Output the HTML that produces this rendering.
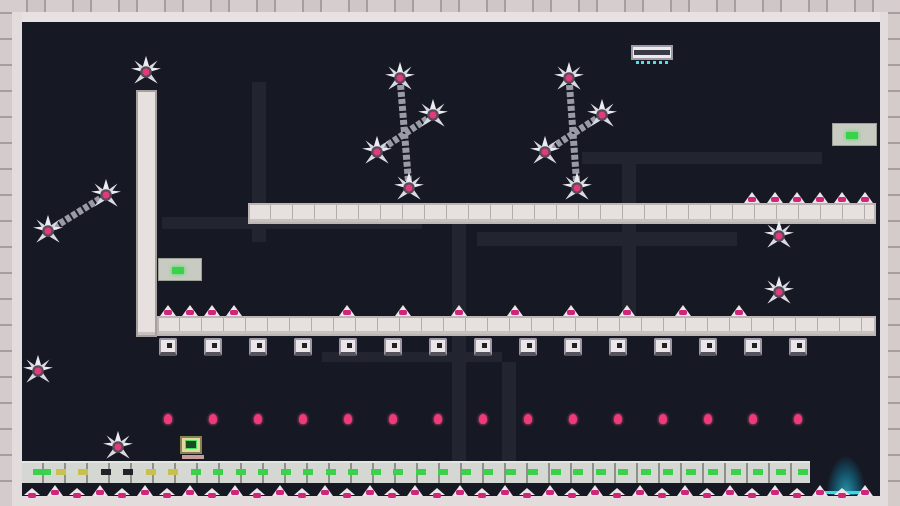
<!DOCTYPE html>
<html><head><meta charset="utf-8"><style>
*{margin:0;padding:0;box-sizing:border-box}
body{width:900px;height:506px;overflow:hidden;background:#c6bcbc;position:relative;font-family:"Liberation Sans",sans-serif}
.a{position:absolute}
#bg{left:22px;top:22px;width:858px;height:474px;background:#161824;overflow:hidden}
.pipe{position:absolute;background:#22252f}
.outer{background:repeating-linear-gradient(90deg,#d6cece 0 26px,#a89e9e 26px 28px,#cfc6c6 28px 44px,#a89e9e 44px 46px)}
.plat{position:absolute;background:#e6e0df;border:2px solid #bdb4b4;box-shadow:inset 0 -3px 0 #c9c0c0}
.plat.d{background:repeating-linear-gradient(90deg,#e6e0df 0 20px,#b4abab 20px 21px,#e6e0df 21px 22px)}
.spk{position:absolute;width:0;height:0;border-left:8px solid transparent;border-right:8px solid transparent;border-bottom:11px solid #ece6e6}
.spk:after{content:"";position:absolute;left:-4px;top:5px;width:8px;height:5px;background:#d0257a;border-radius:2px}
.lamp{position:absolute;width:18px;height:18px;background:#eae6ea;border:2px solid #9c97a2;border-radius:2px;border-bottom:4px solid #55525c}
.lamp:after{content:"";position:absolute;left:6px;top:3px;width:5px;height:5px;background:#222}
.fl{position:absolute;width:8px;height:10px;background:#ee3a78;border-radius:50% 50% 40% 40%;box-shadow:0 0 3px #ff5a90}
.gw{position:absolute;width:12px;height:7px;background:#39d24a;box-shadow:0 0 4px #3de04d}
</style></head><body>
<div class="a outer" style="left:0;top:0;width:900px;height:12px"></div>
<div class="a" style="left:12px;top:12px;width:876px;height:10px;background:#e7e1e1"></div>
<div class="a" style="left:12px;top:12px;width:10px;height:490px;background:#e2dcdc"></div>
<div class="a" style="left:880px;top:12px;width:8px;height:490px;background:#e2dcdc"></div>
<div class="a" style="left:0;top:12px;width:12px;height:494px;background:repeating-linear-gradient(0deg,#d4cbcb 0 24px,#a89e9e 24px 26px)"></div>
<div class="a" style="left:888px;top:12px;width:12px;height:494px;background:repeating-linear-gradient(0deg,#d4cbcb 0 24px,#a89e9e 24px 26px)"></div>
<div class="a" style="left:12px;top:496px;width:876px;height:10px;background:#e2dcdc"></div>
<div id="bg" class="a">
 <div class="pipe" style="left:140px;top:195px;width:260px;height:12px"></div>
 <div class="pipe" style="left:230px;top:60px;width:14px;height:160px"></div>
 <div class="pipe" style="left:430px;top:200px;width:14px;height:240px"></div>
 <div class="pipe" style="left:455px;top:210px;width:260px;height:14px"></div>
 <div class="pipe" style="left:560px;top:130px;width:240px;height:12px"></div>
 <div class="pipe" style="left:480px;top:340px;width:14px;height:100px"></div>
 <div class="pipe" style="left:300px;top:330px;width:180px;height:10px"></div>
 <div class="pipe" style="left:600px;top:140px;width:14px;height:160px"></div>
</div>
<div class="plat" style="left:136px;top:90px;width:21px;height:247px;border-color:#a89f9f"></div>
<div class="plat d" style="left:248px;top:203px;width:628px;height:21px"></div>
<div class="plat d" style="left:157px;top:316px;width:719px;height:20px"></div>
<div class="a" style="left:158px;top:258px;width:44px;height:23px;background:#c7cbc2;border:1px solid #9aa095"></div>
<div class="gw" style="left:172px;top:267px"></div>
<div class="a" style="left:832px;top:123px;width:45px;height:23px;background:#c7cbc2;border:1px solid #9aa095"></div>
<div class="gw" style="left:846px;top:132px"></div>
<div class="a" style="left:631px;top:45px;width:42px;height:15px;background:#eceaee;border:2px solid #9e9aa4"></div>
<div class="a" style="left:634px;top:50px;width:36px;height:5px;background:#3a3a44"></div>
<div class="a" style="left:636px;top:60px;width:32px;height:4px;border-bottom:3px dotted #4fe0e8"></div>
<div class="a" style="left:22px;top:461px;width:788px;height:22px;background:repeating-linear-gradient(90deg,#d5d8d2 0 20px,#8d918a 20px 22px);border-top:2px solid #e4e6e2"></div>
<div class="a" style="left:826px;top:455px;width:40px;height:40px;background:radial-gradient(ellipse at 50% 100%,#2a9ab0 0,#135066 40%,transparent 70%)"></div>
<div class="a" style="left:822px;top:491px;width:46px;height:3px;background:#3ad8e8"></div>
<div class="a" style="left:180px;top:436px;width:22px;height:18px;background:#e2d8a0;border:2px solid #8a8150"></div>
<div class="a" style="left:185px;top:440px;width:12px;height:9px;background:#1c4a22;border:1px solid #48e060"></div>
<div class="a" style="left:182px;top:455px;width:22px;height:4px;background:#c89a9a"></div>
<div id="gen"></div>
<svg class="a" style="left:0;top:0" width="900" height="506">
<g stroke="#9a9aa6" stroke-width="7" stroke-dasharray="5 2" fill="none">
<line x1="400" y1="78" x2="409" y2="188"/><line x1="433" y1="115" x2="377" y2="152"/>
<line x1="569" y1="78" x2="577" y2="188"/><line x1="602" y1="115" x2="545" y2="152"/>
<line x1="106" y1="195" x2="48" y2="231"/>
</g>
<g id="shs"></g>
</svg>
<script>
var g=document.getElementById('gen'),h='';
function s(x,y,st){h+='<div class="spk" style="left:'+(x-8)+'px;top:'+y+'px;'+(st||'')+'"></div>';}
[168,190,212,234].forEach(x=>s(x,305));
for(var x=347;x<760;x+=56)s(x,305);
[752,775,797,820,842,865].forEach(x=>s(x,192));
for(var x=168;x<=800;x+=45){h+='<div class="lamp" style="left:'+(x-9)+'px;top:338px"></div>';h+='<div class="fl" style="left:'+(x-4)+'px;top:414px"></div>';}
for(var x=55;x<880;x+=45)s(x,485);
for(var x=32;x<880;x+=45)s(x,488,'border-bottom-width:7px');
var cols=['#39d24a','#c8c050','#1e2428'];
for(var x=30;x<800;x+=22.5){var i=Math.round((x-30)/22.5);var c=i<1?cols[0]:i<3?cols[1]:i<5?cols[2]:i<7?cols[1]:cols[0];h+='<div class="a" style="left:'+(x+3)+'px;top:469px;width:'+(i==0?18:10)+'px;height:6px;background:'+c+'"></div>';}
g.innerHTML=h;
var p=[[146,72],[400,78],[433,115],[377,152],[409,188],[569,78],[602,115],[545,152],[577,188],[106,195],[48,231],[779,236],[779,292],[38,371],[118,447]],t='';
p.forEach(function(q){var x=q[0],y=q[1];t+='<g transform="translate('+x+','+y+') scale(1.15)"><path d="M0-14L3-4 13-3 3 0 10 10 0 4-10 10-3 0-13-3-3-4Z" fill="#ecebf0"/><path d="M-10-10L0-3 10-10 3 0 10 10 0 3-10 10-3 0Z" fill="#d9d8e0"/><circle r="5" fill="#5a4a5a"/><circle r="3" fill="#e23a7a"/></g>';});
document.getElementById('shs').innerHTML=t;
</script>
</body></html>
